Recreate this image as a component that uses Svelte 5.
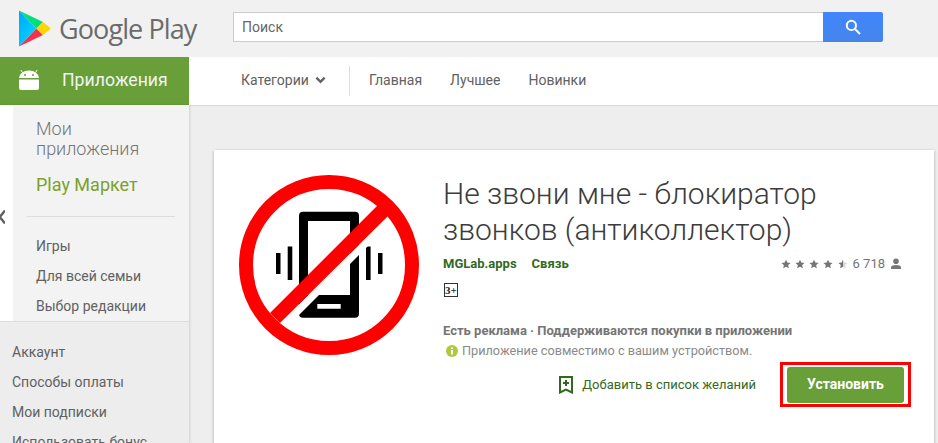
<script>
  const categories = ["Главная", "Лучшее", "Новинки"];
  const shelf = ["Игры", "Для всей семьи", "Выбор редакции"];
  const account = ["Аккаунт", "Способы оплаты", "Мои подписки", "Использовать бонус"];
</script>

<div class="page">
  <header class="top">
    <div class="brand">
      <svg class="play" viewBox="0 0 32 37" width="32" height="37" aria-hidden="true">
        <defs>
          <linearGradient id="playblue" x1="0" y1="0" x2="1" y2="1">
            <stop offset="0" stop-color="#00a4ff" />
            <stop offset="1" stop-color="#00e2ff" />
          </linearGradient>
        </defs>
        <path d="M0 0.5 L0 36.5 L17.5 18.5 Z" fill="url(#playblue)" />
        <path d="M0 0.5 L17.5 18.5 L24 12 Z" fill="#00e07a" />
        <path d="M0 36.5 L17.5 18.5 L24 25 Z" fill="#f5334f" />
        <path d="M24 12 L32 18.5 L24 25 L17.5 18.5 Z" fill="#ffd400" />
      </svg>
      <span class="wordmark">Google Play</span>
    </div>
    <div class="search">
      <span class="field">Поиск</span>
      <button class="go" type="button" aria-label="Поиск">
        <svg viewBox="0 0 16 16" width="16" height="16" aria-hidden="true">
          <circle cx="6.4" cy="6.4" r="4.6" fill="none" stroke="#fff" stroke-width="2" />
          <path d="M10 10 L15 15" stroke="#fff" stroke-width="2" />
        </svg>
      </button>
    </div>
  </header>

  <nav class="bar">
    <div class="section">
      <svg viewBox="0 0 20 20" width="20" height="20" aria-hidden="true">
        <path d="M0 8 A10 7.5 0 0 1 20 8 Z M0 9.5 H20 V18 A2 2 0 0 1 18 20 H2 A2 2 0 0 1 0 18 Z" fill="#fff" />
        <path d="M3.5 2.5 L1.8 0 M16.5 2.5 L18.2 0" stroke="#fff" stroke-width="1" />
        <circle cx="6" cy="5" r="1" fill="#689f38" />
        <circle cx="14" cy="5" r="1" fill="#689f38" />
      </svg>
      <span>Приложения</span>
    </div>
    <div class="links">
      <span class="cat">Категории
        <svg viewBox="0 0 12 8" width="11" height="8" aria-hidden="true">
          <path d="M1.5 1.5 L6 6 L10.5 1.5" fill="none" stroke="#616161" stroke-width="2.6" />
        </svg>
      </span>
      <span class="rule"></span>
      {#each categories as item}
        <span class="link">{item}</span>
      {/each}
    </div>
  </nav>

  <div class="body">
    <aside class="side">
      <div class="upper">
        <svg class="toggle" viewBox="0 0 6 14" width="6" height="14" aria-hidden="true">
          <path d="M6 0.5 L0.8 7 L6 13.5" fill="none" stroke="#616161" stroke-width="2.4" />
        </svg>
        <div class="panel">
          <div class="mine">Мои приложения</div>
          <div class="market">Play Маркет</div>
          <hr />
          <ul class="shelf">
            {#each shelf as item}
              <li>{item}</li>
            {/each}
          </ul>
        </div>
      </div>
      <ul class="account">
        {#each account as item}
          <li>{item}</li>
        {/each}
      </ul>
    </aside>

    <main class="content">
      <article class="card">
        <svg class="icon" viewBox="0 0 180 180" width="180" height="180" role="img" aria-label="Не звони мне">
          <path fill-rule="evenodd" fill="#000" d="M64 36.7 H116 A4 4 0 0 1 120 40.7 V138.7 A4 4 0 0 1 116 142.7 H64 A4 4 0 0 1 60 138.7 V40.7 A4 4 0 0 1 64 36.7 Z M69 46 V120 H111 V46 Z M78.3 129 V133.7 H101.7 V129 Z" />
          <path fill="#000" d="M37 78 H41.5 V99 H37 Z M48.7 71.5 H53.3 V105 H48.7 Z M127 71.5 H131.6 V105 H127 Z M139 78 H143.5 V99 H139 Z" />
          <path fill="#fff" d="M41 148 L149 41 L159 41 L51 149 Z" />
          <circle cx="90" cy="90" r="83" fill="none" stroke="#f00" stroke-width="14" />
          <path fill="#f00" d="M31 138 L139 30 L149 41 L41 148 Z" />
        </svg>
        <div class="info">
          <h1>Не звони мне - блокиратор звонков (антиколлектор)</h1>
          <div class="meta">
            <span class="dev">MGLab.apps</span>
            <span class="genre">Связь</span>
            <span class="rating">
              <span class="stars">
                {#each [0, 1, 2, 3] as i (i)}
                  <svg viewBox="0 0 24 24" width="10" height="10" aria-hidden="true"><path d="M12 1.5 L15.2 8.6 L23 9.4 L17.2 14.6 L18.8 22.3 L12 18.4 L5.2 22.3 L6.8 14.6 L1 9.4 L8.8 8.6 Z" fill="#757575" /></svg>
                {/each}
                <svg viewBox="0 0 24 24" width="10" height="10" aria-hidden="true">
                  <path d="M12 1.5 L15.2 8.6 L23 9.4 L17.2 14.6 L18.8 22.3 L12 18.4 L5.2 22.3 L6.8 14.6 L1 9.4 L8.8 8.6 Z" fill="#d8d8d8" />
                  <path d="M12 1.5 V18.4 L5.2 22.3 L6.8 14.6 L1 9.4 L8.8 8.6 Z" fill="#757575" />
                </svg>
              </span>
              <span class="count">6 718</span>
              <svg viewBox="0 0 12 12" width="12" height="12" aria-hidden="true">
                <circle cx="6" cy="3.2" r="2.8" fill="#757575" />
                <path d="M1 11 V9.4 C1 7.8 3.5 7 6 7 S11 7.8 11 9.4 V11 Z" fill="#757575" />
              </svg>
            </span>
          </div>
          <div class="age">3+</div>
          <div class="ads">Есть реклама · Поддерживаются покупки в приложении</div>
          <div class="compat">
            <svg viewBox="0 0 12 12" width="12" height="12" aria-hidden="true">
              <circle cx="6" cy="6" r="6" fill="#afc83c" />
              <path d="M5 2.4 H7 V4 H5 Z M5 5 H7 V9.6 H5 Z" fill="#fff" />
            </svg>
            <span>Приложение совместимо с вашим устройством.</span>
          </div>
          <div class="actions">
            <span class="wish">
              <svg viewBox="0 0 14 18" width="14" height="18" aria-hidden="true">
                <path d="M1 1 H13 V16.5 L7 13.5 L1 16.5 Z" fill="none" stroke="#33691e" stroke-width="2" />
                <path d="M7 4 V10 M4 7 H10" stroke="#33691e" stroke-width="2" />
              </svg>
              Добавить в список желаний
            </span>
            <span class="mark">
              <button class="install" type="button">Установить</button>
            </span>
          </div>
        </div>
      </article>
    </main>
  </div>
</div>

<style>
  :global(body) {
    margin: 0;
    background: #eee;
  }
  .page {
    width: 938px;
    height: 443px;
    overflow: hidden;
    font-family: Roboto, "Liberation Sans", sans-serif;
    color: #616161;
  }
  .top {
    height: 57px;
    background: #f1f1f1;
    display: flex;
    align-items: center;
  }
  .brand {
    width: 233px;
    padding-left: 19px;
    box-sizing: border-box;
    display: flex;
    align-items: center;
    gap: 8px;
  }
  .play {
    flex: none;
  }
  .wordmark {
    font-family: "Open Sans", sans-serif;
    font-size: 27px;
    letter-spacing: -0.9px;
    color: #6b6b6b;
    white-space: nowrap;
  }
  .search {
    display: flex;
    width: 650px;
    height: 30px;
    margin-top: -3px;
  }
  .field {
    flex: 1;
    background: #fff;
    border: 1px solid #ccc;
    border-right: 0;
    font-size: 14px;
    line-height: 28px;
    padding-left: 8px;
    color: #666;
  }
  .go {
    width: 60px;
    padding: 0;
    border: 0;
    border-radius: 0 2px 2px 0;
    background: linear-gradient(#4285fd, #4485ea);
    display: flex;
    align-items: center;
    justify-content: center;
  }
  .bar {
    height: 48px;
    display: flex;
    background: #fff;
    box-shadow: 0 1px 1px rgba(0, 0, 0, 0.08);
    position: relative;
  }
  .section {
    width: 189px;
    background: #689f38;
    color: #f3f3f3;
    font-size: 17.7px;
    display: flex;
    align-items: center;
    box-sizing: border-box;
    padding: 0 0 2px 19px;
    gap: 23px;
  }
  .links {
    display: flex;
    align-items: center;
    font-size: 14px;
    color: #616161;
    padding: 0 0 3px 52px;
  }
  .cat {
    display: flex;
    align-items: center;
    gap: 6px;
  }
  .rule {
    width: 1px;
    height: 30px;
    background: #ddd;
    margin: 3px 19px 0 23px;
  }
  .link {
    margin-right: 28px;
  }
  .body {
    display: flex;
    height: 338px;
  }
  .side {
    width: 189px;
    flex: none;
    display: flex;
    flex-direction: column;
    box-shadow: 1px 0 2px rgba(0, 0, 0, 0.12);
    position: relative;
  }
  .upper {
    height: 223px;
    background: #fff;
    display: flex;
    position: relative;
    border-bottom: 1px solid #ddd;
  }
  .toggle {
    position: absolute;
    left: -1px;
    top: 105px;
  }
  .panel {
    margin-left: 13px;
    flex: 1;
    background: #f3f3f3;
    padding: 14px 14px 0 14px;
  }
  .mine {
    font-size: 18px;
    line-height: 20px;
    font-weight: 300;
    padding-left: 9px;
    width: 120px;
    color: #757575;
  }
  .market {
    font-size: 18px;
    line-height: 21px;
    color: #7cA12a;
    margin-top: 15px;
    padding-left: 9px;
  }
  hr {
    border: 0;
    border-top: 1px solid #ddd;
    margin: 21px 0 0;
  }
  ul {
    list-style: none;
    margin: 0;
    padding: 0;
  }
  .shelf {
    padding: 14px 0 0 9px;
    font-size: 14px;
    line-height: 30px;
  }
  .account {
    flex: 1;
    background: #ededed;
    padding: 15px 0 0 12px;
    font-size: 14px;
    line-height: 30px;
  }
  .content {
    flex: 1;
    padding: 45px 4px 0 25px;
  }
  .card {
    background: #fff;
    height: 400px;
    box-shadow: 0 1px 3px rgba(0, 0, 0, 0.3);
    display: flex;
    padding: 25px 0 0 25px;
    box-sizing: border-box;
  }
  .icon {
    flex: none;
  }
  .info {
    margin-left: 24px;
    width: 462px;
  }
  h1 {
    margin: 0;
    font-size: 30px;
    line-height: 36px;
    font-weight: 300;
    color: #3c3c3c;
    width: 400px;
    padding-top: 1px;
  }
  .meta {
    display: flex;
    align-items: center;
    margin-top: 9px;
    font-size: 13px;
    font-weight: 700;
    color: #33691e;
    line-height: 14px;
  }
  .genre {
    margin-left: 15px;
  }
  .rating {
    margin: 0 3px 0 auto;
    display: flex;
    align-items: center;
    gap: 5px;
    font-weight: 400;
    color: #757575;
  }
  .stars {
    display: flex;
    gap: 4.2px;
  }
  .age {
    width: 12px;
    height: 12px;
    margin: 12px 0 0 1px;
    border: 1px solid #333;
    font: 700 11px/12px "Liberation Serif", serif;
    color: #222;
    text-align: center;
  }
  .ads {
    margin-top: 27px;
    font-size: 13px;
    font-weight: 700;
    line-height: 14px;
    color: #757575;
  }
  .compat {
    display: flex;
    align-items: center;
    gap: 4px;
    margin: 6px 0 0 3px;
    font-size: 12.7px;
    line-height: 14px;
    color: #8a8a8a;
  }
  .actions {
    display: flex;
    align-items: center;
    justify-content: flex-end;
    margin: 4px -6px 0 0;
  }
  .wish {
    display: flex;
    align-items: center;
    gap: 9px;
    font-size: 13px;
    color: #33691e;
    margin-right: 24px;
  }
  .mark {
    display: block;
    border: 3px solid #f00;
    padding: 2px 4px 0 4px;
    height: 37px;
  }
  .install {
    display: block;
    width: 117px;
    height: 36px;
    padding: 0 0 3px;
    border: 0;
    border-radius: 3px;
    background: #689f38;
    color: #fff;
    font: 700 14px Roboto, sans-serif;
  }
</style>
